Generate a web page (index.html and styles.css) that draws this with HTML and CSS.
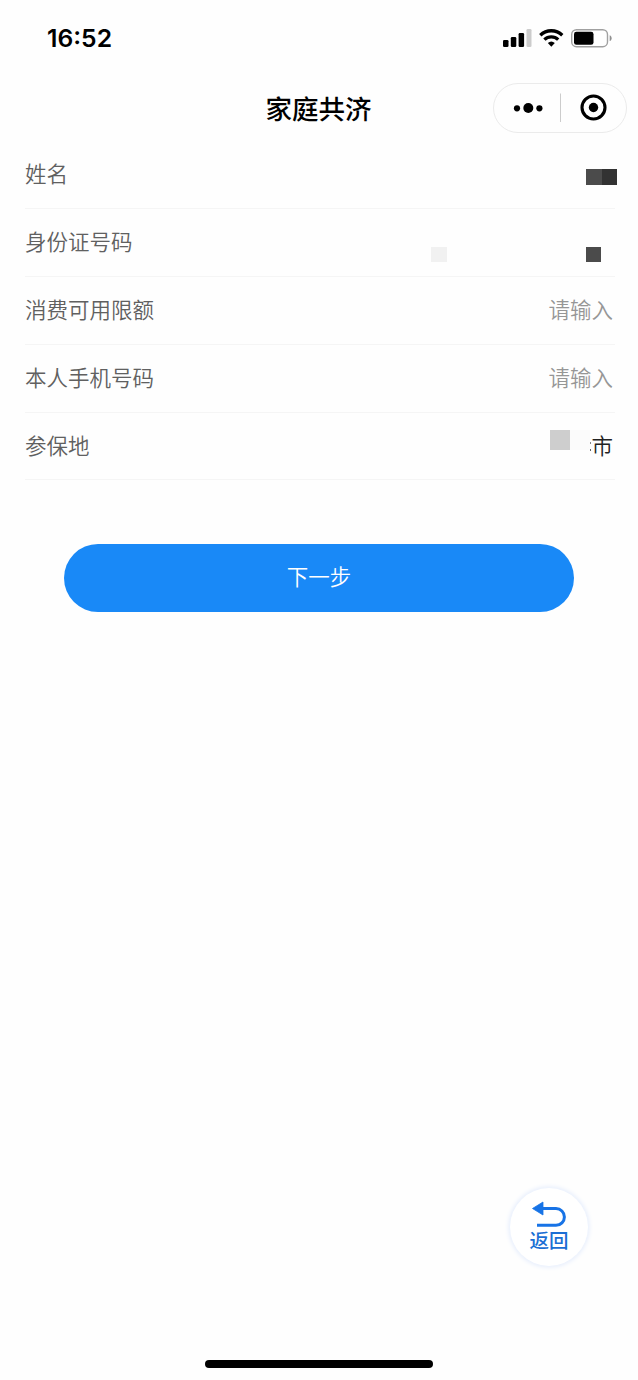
FILE: index.html
```html
<!DOCTYPE html>
<html lang="zh-CN">
<head>
<meta charset="utf-8">
<title>家庭共济</title>
<link rel="stylesheet" href="styles.css">
</head>
<body>
<div class="screen">
  <header class="status">
    <span class="time">16:52</span>
    <svg class="status-icons" width="110" height="20" viewBox="0 0 110 20">
      <rect x="1" y="12" width="5.5" height="7" rx="1.3"/>
      <rect x="8.8" y="9" width="5.5" height="10" rx="1.3"/>
      <rect x="16.6" y="5" width="5.5" height="14" rx="1.3"/>
      <rect x="24.5" y="1" width="5" height="18" rx="1.3" fill="#ccc"/>
      <g fill="none" stroke="#000" stroke-width="3.3">
        <path d="M38.3 7.2a15.8 15.8 0 0 1 22 0"/>
        <path d="M42.4 11.6a10 10 0 0 1 13.8 0"/>
      </g>
      <path d="M45.8 15a5.2 5.2 0 0 1 7 0l-3.5 3.7z"/>
      <rect x="69.7" y="1.7" width="35.8" height="17" rx="4.8" fill="none" stroke="#a0a0a0" stroke-width="1.4"/>
      <rect x="72" y="3.8" width="19.5" height="13" rx="2.4"/>
      <path d="M107.7 7.3c2.6 1 2.6 4.8 0 5.8z" fill="#909090"/>
    </svg>
  </header>

  <nav class="navbar">
    <h1 class="title">家庭共济</h1>
    <div class="capsule">
      <svg width="132" height="48" viewBox="0 0 132 48">
        <circle cx="23" cy="24.3" r="3.1"/>
        <circle cx="34.3" cy="24" r="5"/>
        <circle cx="45.4" cy="24.3" r="3.1"/>
        <path d="M66.5 9.5v28.5" stroke="#ccc" stroke-width="1"/>
        <circle cx="99.5" cy="23.5" r="11.5" fill="none" stroke="#000" stroke-width="3.1"/>
        <circle cx="99.5" cy="23.5" r="4.7"/>
      </svg>
    </div>
  </nav>

  <main>
    <div class="form">
      <div class="row">
        <span>姓名</span>
        <span class="mosaic mosaic-name"><i class="block gray"></i><i class="block dark"></i></span>
      </div>
      <div class="row">
        <span>身份证号码</span>
        <span class="mosaic mosaic-id"><i class="block pale"></i><i class="block gray"></i></span>
      </div>
      <div class="row"><span>消费可用限额</span><span class="placeholder">请输入</span></div>
      <div class="row"><span>本人手机号码</span><span class="placeholder">请输入</span></div>
      <div class="row">
        <span>参保地</span>
        <span class="city"><i class="city-block"></i><i class="city-fade"></i><i class="city-rest"></i>市</span>
      </div>
    </div>
    <button class="next" type="button">下一步</button>
  </main>

  <div class="back">
    <svg width="36" height="26" viewBox="0 0 36 26">
      <path d="M10 7.5h15a8.4 8.4 0 0 1 0 16.8H6" fill="none" stroke="#1773e6" stroke-width="3"/>
      <path d="M1.5 7.5 12 1v13z" fill="#1773e6" stroke="#1773e6" stroke-width=".8" stroke-linejoin="round"/>
    </svg>
    <span>返回</span>
  </div>
  <div class="home-bar"></div>
</div>
</body>
</html>
```
FILE: styles.css
```css
* { box-sizing: border-box; }
body {
  margin: 0;
  background: #fefefe;
  font-family: "Liberation Sans", "Noto Sans CJK SC", sans-serif;
}
.screen {
  position: relative;
  width: 638px;
  height: 1380px;
  overflow: hidden;
}
.status {
  display: flex;
  justify-content: space-between;
  align-items: center;
  height: 76px;
  padding: 0 26px 0 47px;
}
.time {
  font: 600 24.7px/30px Inter, sans-serif;
}
.navbar {
  display: grid;
  grid-template-columns: 1fr auto 1fr;
  align-items: center;
  height: 65px;
  padding: 0 11px 2px;
}
.title {
  grid-column: 2;
  margin: 0 1px 0 0;
  font-family: "Noto Sans CJK SC", sans-serif;
  font-size: 26.5px;
  line-height: 40px;
  font-weight: 500;
}
.capsule {
  justify-self: end;
  width: 134px;
  height: 50px;
  border: 1px solid #ebebeb;
  border-radius: 25px;
}
.capsule svg { display: block; }
.form { padding: 0 23px 0 25px; }
.row {
  display: flex;
  justify-content: space-between;
  align-items: center;
  height: 67.9px;
  padding: 0 2px 2px 0;
  border-bottom: 1.5px solid #f5f5f5;
  font-family: "Noto Sans CJK SC", sans-serif;
  font-size: 21.5px;
  line-height: 32px;
  font-weight: 350;
  color: #606060;
}
.placeholder { color: #969696; }
.mosaic { display: flex; }
.mosaic-name { margin: 7px -4px 0 0; }
.mosaic-id {
  justify-content: space-between;
  width: 170px;
  margin: 26px 12px 0 0;
}
.block { width: 15.5px; height: 15.5px; }
.gray { background: #4b4b4b; }
.dark { background: #323232; }
.pale { background: #f1f1f1; }
.city {
  display: flex;
  color: #222;
}
.city-block {
  width: 20px;
  height: 20px;
  margin-top: 1px;
  background: #cecece;
}
.city-fade {
  width: 20px;
  height: 20px;
  margin-top: 1px;
  background: #fbfbfb;
}
.city-rest {
  width: 1.5px;
  height: 9px;
  margin-top: 13px;
  border-top: 2px solid #888;
  border-bottom: 2px solid #666;
}
.next {
  display: block;
  width: 510px;
  height: 68px;
  margin: 64px auto 0;
  padding: 0 0 5px;
  border: 0;
  border-radius: 34px;
  background: #1989f7;
  color: #fff;
  font-family: "Noto Sans CJK SC", sans-serif;
  font-size: 21.5px;
  font-weight: 350;
}
.back {
  position: absolute;
  left: 510px;
  top: 1188px;
  display: flex;
  flex-direction: column;
  align-items: center;
  width: 78px;
  height: 78px;
  padding-top: 13px;
  border-radius: 50%;
  background: #fff;
  box-shadow: 0 0 5px 1px #e2ebfc;
  font-family: "Noto Sans CJK SC", sans-serif;
  font-size: 19.5px;
  line-height: 26px;
  font-weight: 500;
  color: #1b6fd4;
}
.home-bar {
  position: absolute;
  left: 205px;
  top: 1360px;
  width: 228px;
  height: 7.5px;
  border-radius: 4px;
  background: #000;
}
```
